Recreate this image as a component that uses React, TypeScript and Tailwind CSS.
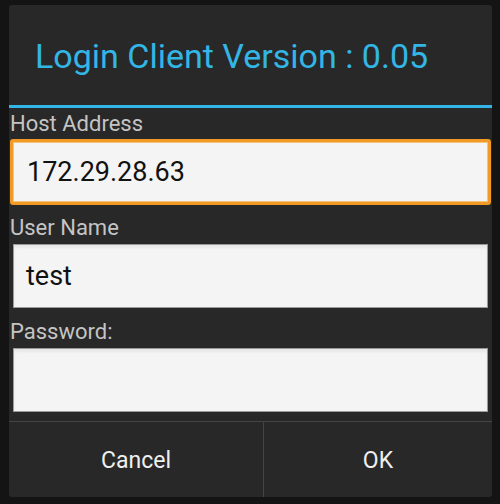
export default function App() {
  return (
    <div className="w-[500px] h-[504px] bg-[#141414] pt-[5px] pl-[9px] font-['Roboto',sans-serif]">
      <div className="w-[483px] h-[492px] bg-[#282828] rounded-[3px] flex flex-col overflow-hidden">
        {/* Title */}
        <div className="h-[100px] flex items-center pl-[26px] pt-[2px] text-[34px] text-[#33b5e5] leading-none">
          Login Client Version : 0.05
        </div>
        <div className="h-[3px] bg-[#33b5e5]" />

        {/* Fields */}
        <div className="flex flex-col">
          <label className="h-[31px] flex items-end pl-px text-[22px] leading-none text-[#c4c4c4] pb-[4px]">
            Host Address
          </label>
          <div className="mx-px h-[66px] rounded-[3px] border-[3px] border-[#f19a27] bg-[#f4f4f4] shadow-[inset_0_0_0_1px_#f7c27a] flex items-center pl-[14px] text-[27px] text-[#111]">
            172.29.28.63
          </div>

          <label className="h-[39px] flex items-end pl-px text-[22px] leading-none text-[#c4c4c4] pb-[5px]">
            User Name
          </label>
          <div className="mx-[4px] h-[64px] border border-[#9a9a9a] bg-[#f4f4f4] shadow-[inset_0_3px_3px_rgba(0,0,0,0.05)] flex items-center pl-[12px] text-[27px] text-[#111]">
            test
          </div>

          <label className="h-[40px] flex items-end pl-px text-[22px] leading-none text-[#c4c4c4] pb-[5px]">
            Password:
          </label>
          <div className="mx-[4px] h-[64px] border border-[#9a9a9a] bg-[#f4f4f4] shadow-[inset_0_3px_3px_rgba(0,0,0,0.05)]" />
        </div>

        {/* Buttons */}
        <div className="mt-[9px] flex-1 flex border-t border-[#444]">
          <button className="w-[255px] border-r border-[#444] pt-[3px] text-[23px] text-[#efefef]">
            Cancel
          </button>
          <button className="flex-1 pt-[3px] text-[23px] text-[#efefef]">OK</button>
        </div>
      </div>
    </div>
  );
}
